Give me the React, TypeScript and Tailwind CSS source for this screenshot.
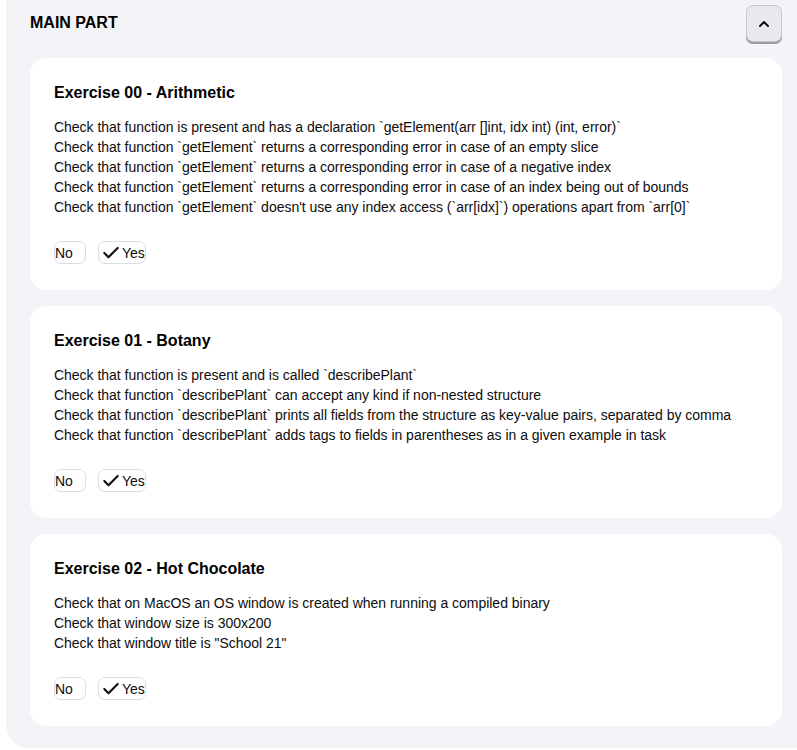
import React from "react";

const exercises = [
  {
    title: "Exercise 00 - Arithmetic",
    lines: [
      "Check that function is present and has a declaration `getElement(arr []int, idx int) (int, error)`",
      "Check that function `getElement` returns a corresponding error in case of an empty slice",
      "Check that function `getElement` returns a corresponding error in case of a negative index",
      "Check that function `getElement` returns a corresponding error in case of an index being out of bounds",
      "Check that function `getElement` doesn't use any index access (`arr[idx]`) operations apart from `arr[0]`",
    ],
  },
  {
    title: "Exercise 01 - Botany",
    lines: [
      "Check that function is present and is called `describePlant`",
      "Check that function `describePlant` can accept any kind if non-nested structure",
      "Check that function `describePlant` prints all fields from the structure as key-value pairs, separated by comma",
      "Check that function `describePlant` adds tags to fields in parentheses as in a given example in task",
    ],
  },
  {
    title: "Exercise 02 - Hot Chocolate",
    lines: [
      "Check that on MacOS an OS window is created when running a compiled binary",
      "Check that window size is 300x200",
      'Check that window title is "School 21"',
    ],
  },
];

function Card({ title, lines }: { title: string; lines: string[] }) {
  return (
    <div className="bg-white rounded-[16px] pl-6 pr-6 pt-[23px] pb-[26px]">
      <h3 className="text-[16px] leading-[24px] font-bold text-black">{title}</h3>
      <div className="mt-[12px] text-[14px] leading-[20px] text-[#0d0d0d] tracking-[-0.02px]">
        {lines.map((l, i) => (
          <div key={i}>{l}</div>
        ))}
      </div>
      <div className="mt-[24px] flex items-center gap-3">
        <button className="h-[23px] w-[32px] text-left pl-0 border border-[#d8dce3] rounded-[7px] bg-white text-[14px] leading-[20px] text-[#0d0d0d]">
          No
        </button>
        <button className="h-[23px] flex items-center pl-[2px] pr-0 border border-[#d8dce3] rounded-[7px] bg-white text-[14px] leading-[20px] text-[#0d0d0d]">
          <svg width="20" height="20" viewBox="0 0 24 24" fill="none" stroke="#111" strokeWidth="2.6" strokeLinecap="round" strokeLinejoin="round">
            <path d="M20 6 9 17l-5-5" />
          </svg>
          <span className="ml-[1px]">Yes</span>
        </button>
      </div>
    </div>
  );
}

export default function App() {
  return (
    <div className="w-[797px] h-[750px] overflow-hidden bg-white" style={{ fontFamily: '"Liberation Sans", Arial, sans-serif' }}>
      <div className="ml-[6px] w-[815px] bg-[#f4f4f8] rounded-b-[22px] pl-6 pr-[39px] pt-[5px] pb-[22px]">
        <div className="flex items-center justify-between h-[37px] pr-0">
          <h2 className="text-[16px] font-bold text-black leading-[24px] -mt-[1px]">MAIN PART</h2>
          <button className="w-[36px] h-[37px] mr-0 flex items-center justify-center rounded-[7px] bg-[#e9e9ed] border border-[#c8c8cc] shadow-[0_2px_0_#9a9a9e]">
            <svg width="12" height="8" viewBox="0 0 12 8" fill="none" stroke="#111" strokeWidth="2" strokeLinecap="round" strokeLinejoin="round">
              <path d="M2 6 6 2l4 4" />
            </svg>
          </button>
        </div>
        <div className="mt-[16px] flex flex-col gap-4">
          {exercises.map((e, i) => (
            <Card key={i} title={e.title} lines={e.lines} />
          ))}
        </div>
      </div>
    </div>
  );
}
